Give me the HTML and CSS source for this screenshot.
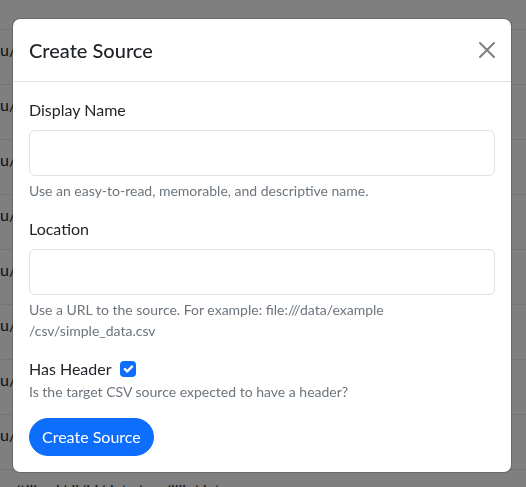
FILE: index.html
```html
<!DOCTYPE html>
<html lang="en">
<head>
<meta charset="utf-8">
<title>Create Source</title>
<link rel="stylesheet" href="styles.css">
</head>
<body>
<div class="page">
  <div class="table">
    <div class="thead"></div>
    <div class="row"><span class="cell">u/</span></div>
    <div class="row"><span class="cell">u/</span></div>
    <div class="row"><span class="cell">u/</span></div>
    <div class="row"><span class="cell">u/</span></div>
    <div class="row"><span class="cell">u/</span></div>
    <div class="row"><span class="cell">u/</span></div>
    <div class="row"><span class="cell">u/</span></div>
    <div class="row"><span class="cell">u/</span></div>
    <div class="row"><span class="cell cell-wide">/tllbarl/dl/kl/data/csv/lllb/data</span></div>
  </div>
</div>
<div class="backdrop">
  <div class="modal">
    <div class="modal-header">
      <h5 class="modal-title">Create Source</h5>
      <button class="btn-close" type="button" aria-label="Close">
        <svg width="16" height="16" viewBox="0 0 16 16"><path d="M.293.293a1 1 0 0 1 1.414 0L8 6.586 14.293.293a1 1 0 1 1 1.414 1.414L9.414 8l6.293 6.293a1 1 0 0 1-1.414 1.414L8 9.414l-6.293 6.293a1 1 0 0 1-1.414-1.414L6.586 8 .293 1.707a1 1 0 0 1 0-1.414z" fill="#000"/></svg>
      </button>
    </div>
    <div class="modal-body">
      <div class="field">
        <label class="form-label">Display Name</label>
        <input class="form-control" type="text">
        <div class="form-text">Use an easy-to-read, memorable, and descriptive name.</div>
      </div>
      <div class="field">
        <label class="form-label">Location</label>
        <input class="form-control" type="text">
        <div class="form-text">Use a URL to the source. For example: file:///data/example<br>/csv/simple_data.csv</div>
      </div>
      <div class="field">
        <div class="check-row">
          <span class="check-label">Has Header</span>
          <span class="checkbox">
            <svg width="16" height="16" viewBox="0 0 20 20"><path d="m6 10 3 3 6-6" fill="none" stroke="#fff" stroke-width="3" stroke-linecap="round" stroke-linejoin="round"/></svg>
          </span>
        </div>
        <div class="form-text tight">Is the target CSV source expected to have a header?</div>
      </div>
      <button class="btn-primary" type="button">Create Source</button>
    </div>
  </div>
</div>
</body>
</html>
```
FILE: styles.css
```css
* { box-sizing: border-box; }
html, body { margin: 0; padding: 0; }
body {
  font-family: Lato, "Open Sans", "Liberation Sans", sans-serif;
  font-size: 16px;
  line-height: 1.5;
  color: #212529;
  background: #fff;
  width: 526px;
  height: 487px;
  overflow: hidden;
}
.page { width: 526px; }
.thead { height: 29px; }
.row {
  height: 55px;
  border-top: 1px solid #e8e8e8;
  padding: 8px 0;
  white-space: nowrap;
  overflow: hidden;
}
.cell { display: block; line-height: 24px; }
.cell-wide { padding-left: 13px; }

.backdrop {
  position: fixed;
  inset: 0;
  background: rgba(0, 0, 0, 0.5);
  padding: 18px 0 0 12px;
}
.modal {
  width: 500px;
  background: #fff;
  border: 1px solid rgba(0, 0, 0, 0.175);
  border-radius: 8px;
  background-clip: padding-box;
}
.modal-header {
  display: flex;
  align-items: center;
  padding: 16px;
  border-bottom: 1px solid #dee2e6;
}
.modal-title {
  margin: 0;
  font-size: 20px;
  font-weight: 500;
  line-height: 30px;
}
.btn-close {
  margin: -8px -8px -8px auto;
  padding: 8px;
  width: 32px;
  height: 32px;
  border: 0;
  background: transparent;
  opacity: 0.5;
  display: flex;
  align-items: center;
  justify-content: center;
}
.btn-close svg { display: block; }
.modal-body { padding: 16px; }
.field { margin-bottom: 16px; }
.form-label {
  display: block;
  margin-bottom: 8px;
  line-height: 24px;
}
.form-control {
  display: block;
  width: 100%;
  height: 46px;
  border: 1px solid #dee2e6;
  border-radius: 6px;
  padding: 10px 12px;
  font: inherit;
  background: #fff;
}
.form-text {
  margin-top: 4px;
  font-size: 14px;
  line-height: 21px;
  color: #6c757d;
}
.form-text.tight { margin-top: 0; }
.check-row {
  display: flex;
  align-items: center;
  gap: 8px;
  line-height: 24px;
}
.checkbox {
  width: 16px;
  height: 16px;
  border-radius: 4px;
  background: #0d6efd;
  display: flex;
}
.checkbox svg { display: block; }
.btn-primary {
  display: inline-block;
  font: inherit;
  line-height: 24px;
  color: #fff;
  background: #0d6efd;
  border: 1px solid #0d6efd;
  border-radius: 50rem;
  padding: 6px 12px;
}
```
